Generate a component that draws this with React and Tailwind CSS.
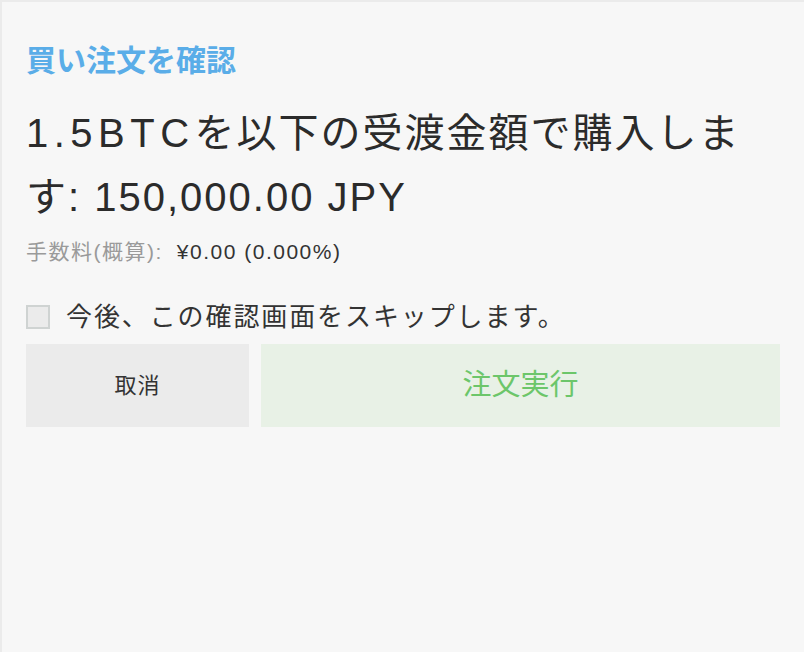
const font = { fontFamily: '"Liberation Sans", "Noto Sans CJK JP", sans-serif' };

const ConfirmBuyOrder = () => {
    return (
        <div
            className="h-[652px] w-[804px] overflow-hidden border-l-2 border-t-2 border-[#ebebeb] bg-[#f7f7f7] px-6 pt-[39px]"
            style={font}
        >
            <h1 className="text-[30px] font-bold leading-[40px] text-[#5aade8]">
                買い注文を確認
            </h1>
            <h2 className="mt-5 text-[40px] leading-[64px] tracking-[2px] text-[#2b2b2b]">
                <span className="tracking-[5.5px]">1.5BTC</span>
                <span>を以下の受渡金額で購入します: 150,000.00 JPY</span>
            </h2>
            <p className="mt-2 flex items-center gap-[14px] text-[21px] leading-[30px] tracking-[1.5px]">
                <span className="text-[#9a9a9a]">手数料(概算):</span>
                <span className="text-[#333]">¥0.00 (0.000%)</span>
            </p>

            <label className="mt-8 flex h-9 items-center gap-4">
                <span className="block h-6 w-6 border-2 border-[#cfd3d2] bg-[#ebebeb]" />
                <span className="text-[26px] tracking-[1.9px] text-[#333]">
                    今後、この確認画面をスキップします。
                </span>
            </label>

            <div className="mt-[9px] flex gap-3">
                <button
                    type="button"
                    className="h-[83px] w-[223px] bg-[#ebebeb] text-[22px] tracking-[1px] text-[#333]"
                >
                    取消
                </button>
                <button
                    type="button"
                    className="h-[83px] flex-1 bg-[#e8f1e6] text-[29px] text-[#6cc66a]"
                >
                    注文実行
                </button>
            </div>
        </div>
    );
};

export default function App() {
    return <ConfirmBuyOrder />;
}
